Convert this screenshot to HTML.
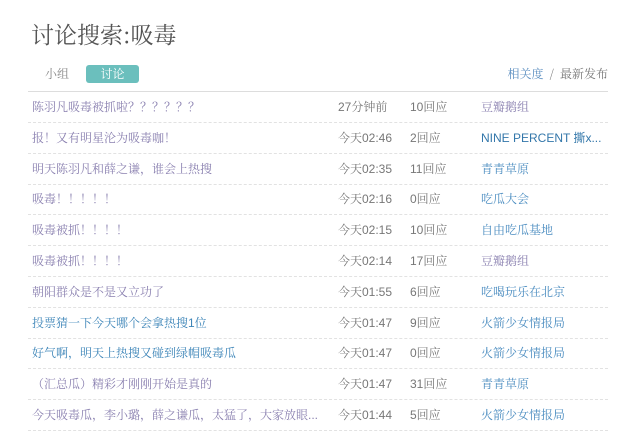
<!DOCTYPE html>
<html><head><meta charset="utf-8"><style>
body{margin:0;background:#fff;font-family:"Liberation Sans","Noto Serif CJK SC",serif;font-size:12px;width:640px;height:429px;overflow:hidden;position:relative}
h1{position:absolute;left:31px;top:17px;margin:0;font-size:23px;font-weight:normal;color:#555;font-family:"Noto Serif CJK SC",serif}
.t1{position:absolute;left:45px;top:65px;line-height:18px;color:#888;font-family:"Noto Serif CJK SC",serif}
.t2{position:absolute;left:86px;top:65px;width:53px;height:18px;background:#6bbfbd;color:#fff;border-radius:3px;text-align:center;line-height:18px;font-family:"Noto Serif CJK SC",serif}
.sort{position:absolute;right:32px;top:65px;line-height:18px;color:#777;font-family:"Noto Serif CJK SC",serif}
.sort a{color:#5b8ec0}
.hr{position:absolute;left:28px;width:580px;top:91px;border-top:1px solid #ddd}
.row{position:absolute;left:28px;width:580px;height:30px;border-bottom:1px dashed #e2e2e2;line-height:30px;white-space:nowrap}
.row span{position:absolute}
.a{left:4px;color:#8a80b0}
.b{color:#3d85b8}
.tm{left:310px;color:#777}
.rp{left:382px;color:#777}
.g{left:453px;color:#4a8cc0}
.p{color:#8a80b0}
.n{font-family:"Liberation Sans",sans-serif;color:#37a}
</style></head><body>
<h1>讨论搜索:吸毒</h1>
<div class="t1">小组</div><div class="t2">讨论</div>
<div class="sort"><a>相关度</a> &nbsp;/&nbsp; 最新发布</div>
<div class="hr"></div>
<div class="row" style="top:92px"><span class="a">陈羽凡吸毒被抓啦？？？？？？</span><span class="tm">27分钟前</span><span class="rp">10回应</span><span class="g p">豆瓣鹅组</span></div>
<div class="row" style="top:123px"><span class="a">报！又有明星沦为吸毒咖！</span><span class="tm">今天02:46</span><span class="rp">2回应</span><span class="g n">NINE PERCENT 撕x...</span></div>
<div class="row" style="top:154px"><span class="a">明天陈羽凡和薛之谦，谁会上热搜</span><span class="tm">今天02:35</span><span class="rp">11回应</span><span class="g">青青草原</span></div>
<div class="row" style="top:184px"><span class="a">吸毒！！！！！</span><span class="tm">今天02:16</span><span class="rp">0回应</span><span class="g">吃瓜大会</span></div>
<div class="row" style="top:215px"><span class="a">吸毒被抓！！！！</span><span class="tm">今天02:15</span><span class="rp">10回应</span><span class="g">自由吃瓜基地</span></div>
<div class="row" style="top:246px"><span class="a">吸毒被抓！！！！</span><span class="tm">今天02:14</span><span class="rp">17回应</span><span class="g p">豆瓣鹅组</span></div>
<div class="row" style="top:277px"><span class="a">朝阳群众是不是又立功了</span><span class="tm">今天01:55</span><span class="rp">6回应</span><span class="g">吃喝玩乐在北京</span></div>
<div class="row" style="top:308px"><span class="a b">投票猜一下今天哪个会拿热搜1位</span><span class="tm">今天01:47</span><span class="rp">9回应</span><span class="g">火箭少女情报局</span></div>
<div class="row" style="top:338px"><span class="a b">好气啊，明天上热搜又碰到绿帽吸毒瓜</span><span class="tm">今天01:47</span><span class="rp">0回应</span><span class="g">火箭少女情报局</span></div>
<div class="row" style="top:369px"><span class="a">（汇总瓜）精彩才刚刚开始是真的</span><span class="tm">今天01:47</span><span class="rp">31回应</span><span class="g">青青草原</span></div>
<div class="row" style="top:400px"><span class="a">今天吸毒瓜，李小璐，薛之谦瓜，太猛了，大家放眼...</span><span class="tm">今天01:44</span><span class="rp">5回应</span><span class="g">火箭少女情报局</span></div>
</body></html>
